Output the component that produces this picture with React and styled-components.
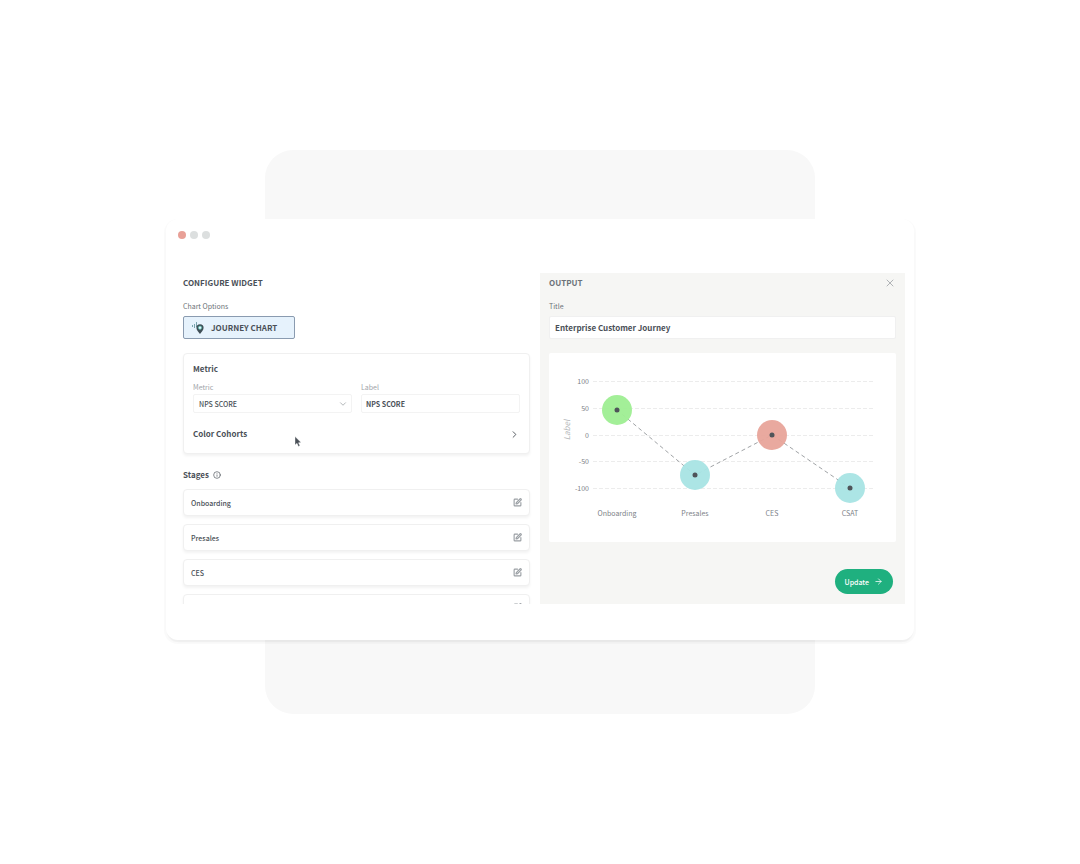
import React from 'react'
import styled, { createGlobalStyle } from 'styled-components';
import { ArrowRight, ChevronDown, ChevronRight, Info, SquarePen, X } from 'lucide-react';

// the last one is still unnamed
const stages = ['Onboarding', 'Presales', 'CES', '']

const ticks = [
  { value: '100', y: 28 },
  { value: '50', y: 55 },
  { value: '0', y: 82 },
  { value: '-50', y: 108 },
  { value: '-100', y: 135 },
]

const points = [
  { name: 'Onboarding', x: 68, y: 57, color: '#9eee92' },
  { name: 'Presales', x: 146, y: 122, color: '#a8e4e4' },
  { name: 'CES', x: 223, y: 82, color: '#e8a49a' },
  { name: 'CSAT', x: 301, y: 135, color: '#a8e4e4' },
]

function PinIcon() {
  return (
    <svg width="14" height="14" viewBox="0 0 14 14" aria-hidden="true">
      <path d="M1.5 4v2M3.5 3v4M5.5 1v5" stroke="#5d8f99" strokeWidth="0.8" fill="none" />
      <path
        d="M9 3.200a3.600 3.600 0 0 0-3.600 3.600c0 2.500 2.100 4 3.600 6.200 1.500-2.200 3.600-3.700 3.600-6.200A3.600 3.600 0 0 0 9 3.200z"
        fill="#3f4f57"
      />
      <circle cx="9" cy="6.700" r="1.700" fill="#e6f2fc" stroke="#35b39a" strokeWidth="0.600" />
    </svg>
  )
}

function JourneyChart() {
  return (
    <Chart viewBox="0 0 347 189" role="img" aria-label="Journey chart">
      {ticks.map((tick) => (
        <g key={tick.value}>
          <GridLine x1="44" x2="324" y1={tick.y + 0.5} y2={tick.y + 0.5} />
          <TickText x="40" y={tick.y + 3} textAnchor="end">{tick.value}</TickText>
        </g>
      ))}
      <AxisText transform="translate(21 77) rotate(-90)" textAnchor="middle">Label</AxisText>
      <Journey points={points.map((point) => `${point.x},${point.y}`).join(' ')} />
      {points.map((point) => (
        <g key={point.name}>
          <circle cx={point.x} cy={point.y} r="15" fill={point.color} fillOpacity="0.95" />
          <circle cx={point.x} cy={point.y} r="2.5" fill="#4f5459" />
          <TickText x={point.x} y="163" textAnchor="middle">{point.name}</TickText>
        </g>
      ))}
    </Chart>
  )
}

function App() {
  return (
    <Page>
      <GlobalStyle />
      <Backdrop />
      <Window>
        <TitleBar>
          <Dot $active />
          <Dot />
          <Dot />
        </TitleBar>
        <Body>
          <Configure>
            <Heading>CONFIGURE WIDGET</Heading>
            <Label as="p">Chart Options</Label>
            <ChartButton type="button">
              <PinIcon />
              JOURNEY CHART
            </ChartButton>

            <MetricCard>
              <SubHeading>Metric</SubHeading>
              <Fields>
                <div>
                  <SmallLabel htmlFor="metric">Metric</SmallLabel>
                  <SelectWrap>
                    <Select id="metric" defaultValue="nps">
                      <option value="nps">NPS SCORE</option>
                    </Select>
                    <ChevronDown size={10} strokeWidth={2} />
                  </SelectWrap>
                </div>
                <div>
                  <SmallLabel htmlFor="label">Label</SmallLabel>
                  <SmallInput id="label" defaultValue="NPS SCORE" $strong />
                </div>
              </Fields>
              <CohortsButton type="button">
                Color Cohorts
                <ChevronRight size={11} strokeWidth={2} />
              </CohortsButton>
              <Cursor width="8" height="12" viewBox="0 0 8 12" aria-hidden="true">
                <path d="M1 0.500v8.500l2-1.700 1.400 3.200 1.500-.7-1.400-3 2.600-.3z" fill="#4a5057" stroke="#ffffff" strokeWidth="0.400" />
              </Cursor>
            </MetricCard>

            <StagesTitle>
              Stages
              <Info size={8} strokeWidth={2} />
            </StagesTitle>
            <StageList>
              {stages.map((stage) => (
                <Stage key={stage}>
                  <span>{stage}</span>
                  <IconButton type="button" aria-label={`Edit ${stage}`}>
                    <SquarePen size={9} strokeWidth={3} />
                  </IconButton>
                </Stage>
              ))}
            </StageList>
          </Configure>

          <Output>
            <OutputHeader>
              <Heading $muted>OUTPUT</Heading>
              <IconButton type="button" aria-label="Close" $light>
                <X size={12} strokeWidth={2} />
              </IconButton>
            </OutputHeader>
            <Label htmlFor="title">Title</Label>
            <TitleInput id="title" defaultValue="Enterprise Customer Journey" />
            <ChartCard>
              <JourneyChart />
            </ChartCard>
            <UpdateButton type="button">
              Update
              <ArrowRight size={9} strokeWidth={2} />
            </UpdateButton>
          </Output>
        </Body>
      </Window>
    </Page>
  )
}

export default App

const GlobalStyle = createGlobalStyle`
    * {
        box-sizing:border-box;
    }
    body {
        margin:0;
        background:#ffffff;
        color:#4a5057;
    }
    body, button, input, select {
        font-family:"Noto Sans CJK SC", "Open Sans", sans-serif;
    }
    h1, h2, p, ul {
        margin:0;
        padding:0;
    }
`

const Page = styled.main`
    min-height:100vh;
    display:grid;
    grid-template-columns:minmax(0, 748px);
    justify-content:center;
    align-content:center;
`

const Backdrop = styled.div`
    grid-area:1 / 1;
    justify-self:center;
    width:100%;
    max-width:550px;
    border-radius:28px;
    background:#f8f8f8;
`

const Window = styled.section`
    grid-area:1 / 1;
    margin:69px 0 74px;
    padding-bottom:36px;
    border-radius:12px;
    background:#ffffff;
    box-shadow:0 2px 1px 2px rgba(0, 0, 0, 0.025), 0 3px 1px -1px rgba(0, 0, 0, 0.04);
`

const TitleBar = styled.div`
    display:flex;
    gap:4px;
    height:54px;
    padding:12px;
`

const Dot = styled.span`
    width:8px;
    height:8px;
    border-radius:50%;
    background:${props => props.$active ? '#e8a097' : '#dcdfdf'};
`

const Body = styled.div`
    display:grid;
    grid-template-columns:minmax(0, 374fr) minmax(0, 365fr);
    padding-right:9px;
`

const Configure = styled.div`
    max-height:331px;
    padding:0 10px 0 17px;
    overflow:hidden;
`

const Output = styled.div`
    display:flex;
    flex-direction:column;
    padding:0 9px 10px;
    background:#f6f6f4;
`

const OutputHeader = styled.div`
    display:flex;
    justify-content:space-between;
    align-items:center;
`

const Heading = styled.h1`
    font-size:8px;
    font-weight:700;
    line-height:20px;
    color:${props => props.$muted ? '#6c7278' : '#4a5057'};
`

const Label = styled.label`
    display:block;
    margin:6px 0 2px;
    font-size:7px;
    line-height:15px;
    color:#6c7278;
`

const ChartButton = styled.button`
    display:flex;
    align-items:center;
    gap:6px;
    width:112px;
    height:23px;
    padding:0 7px;
    border:1px solid #8a9bb0;
    border-radius:2px;
    background:#e6f2fc;
    color:#4a5057;
    font-size:8px;
    font-weight:700;
    white-space:nowrap;
`

const Card = styled.div`
    border:1px solid #f0f0f0;
    border-radius:4px;
    background:#ffffff;
    box-shadow:0 2px 3px rgba(0, 0, 0, 0.05);
`

const MetricCard = styled(Card)`
    position:relative;
    margin-top:14px;
    padding:5px 9px 9px;
`

const SubHeading = styled.h2`
    font-size:8px;
    font-weight:700;
    line-height:20px;
`

const Fields = styled.div`
    display:grid;
    grid-template-columns:1fr 1fr;
    gap:9px;
    margin-bottom:11px;
`

const SmallLabel = styled.label`
    display:block;
    margin:2px 0 1px;
    font-size:7px;
    line-height:12px;
    color:#a0a4a8;
`

const SmallInput = styled.input`
    display:block;
    width:100%;
    height:19px;
    padding:0 4px;
    border:1px solid #f3f3f3;
    border-radius:2px;
    background:#ffffff;
    color:#4a5057;
    font-size:7px;
    font-weight:${props => props.$strong ? 700 : 500};
`

const SelectWrap = styled.div`
    position:relative;

    svg {
        position:absolute;
        top:5px;
        right:4px;
        color:#a4a8ac;
        pointer-events:none;
    }
`

const Select = styled(SmallInput).attrs({ as: 'select' })`
    padding:0 16px 0 5px;
    appearance:none;
`

const CohortsButton = styled.button`
    display:flex;
    justify-content:space-between;
    align-items:center;
    width:100%;
    padding:0;
    border:none;
    background:none;
    color:#4a5057;
    font-size:8px;
    font-weight:700;
    line-height:20px;
`

const Cursor = styled.svg`
    position:absolute;
    left:110px;
    top:82px;
`

const StagesTitle = styled(SubHeading)`
    display:flex;
    align-items:center;
    gap:4px;
    margin:11px 0 4px;
`

const StageList = styled.ul`
    display:grid;
    gap:8px;
    list-style:none;
`

const Stage = styled(Card).attrs({ as: 'li' })`
    display:flex;
    justify-content:space-between;
    align-items:center;
    height:27px;
    padding:0 7px;
    font-size:7px;
    font-weight:500;
`

const IconButton = styled.button`
    display:flex;
    padding:0;
    border:none;
    background:none;
    color:${props => props.$light ? '#b0b3b6' : '#9a9fa4'};
`

const TitleInput = styled.input`
    width:100%;
    height:23px;
    padding:0 5px;
    border:1px solid #f0f0f0;
    border-radius:2px;
    background:#ffffff;
    color:#4a5057;
    font-size:8px;
    font-weight:700;
`

const ChartCard = styled.div`
    margin-top:14px;
    border-radius:2px;
    background:#ffffff;
`

const Chart = styled.svg`
    display:block;
    width:100%;
`

const GridLine = styled.line`
    stroke:#ececec;
    stroke-width:1;
    stroke-dasharray:4 2;
`

const TickText = styled.text`
    fill:#7c8187;
    font-size:7px;
`

const AxisText = styled.text`
    fill:#b4b7ba;
    font-size:8px;
    font-style:italic;
`

const Journey = styled.polyline`
    fill:none;
    stroke:#a0a3a6;
    stroke-width:1;
    stroke-dasharray:4 3;
`

const UpdateButton = styled.button`
    display:flex;
    align-items:center;
    align-self:flex-end;
    gap:5px;
    height:25px;
    margin:27px 3px 0 0;
    padding:0 10px;
    border:none;
    border-radius:100px;
    background:#1fb07f;
    color:#ffffff;
    font-size:7px;
    font-weight:500;
`
